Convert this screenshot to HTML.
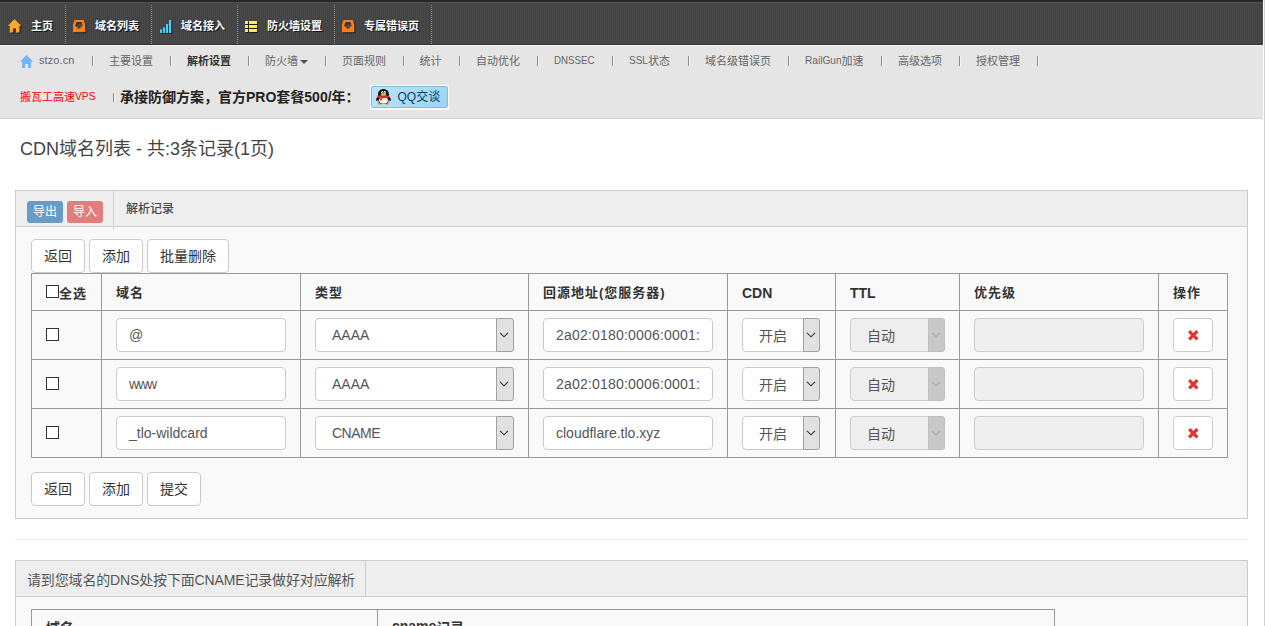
<!DOCTYPE html>
<html lang="zh-CN">
<head>
<meta charset="utf-8">
<title>CDN域名列表</title>
<style>
*{box-sizing:border-box;}
html,body{margin:0;padding:0;}
body{width:1265px;height:626px;overflow:hidden;background:#fff;font-family:"Liberation Sans","Noto Sans CJK SC",sans-serif;font-size:14px;line-height:1.42857;color:#333;position:relative;}
#wrap{position:absolute;left:0;top:0;width:1263px;height:626px;overflow:hidden;}
#sb{position:absolute;left:1264px;top:0;width:1px;height:626px;background:#d0d0d0;}
#topbar{position:absolute;left:0;top:0;width:1263px;height:45px;background-color:#444;background-image:repeating-linear-gradient(90deg,rgba(255,255,255,.03) 0,rgba(255,255,255,.03) 1px,transparent 1px,transparent 2px),repeating-linear-gradient(0deg,rgba(0,0,0,.05) 0,rgba(0,0,0,.05) 1px,transparent 1px,transparent 2px);border-top:2px solid #272727;border-bottom:1px solid #353535;box-shadow:inset 0 1px 0 #555;}
#topbar .it{position:absolute;top:3px;height:40px;color:#fff;font-weight:bold;font-size:11px;line-height:16px;}
#topbar .it span{position:absolute;top:13px;white-space:nowrap;text-shadow:1px 1px 0 #111;}
#topbar .it svg{position:absolute;}
#topbar .it::after{content:"";position:absolute;right:0;top:0;width:1px;height:39px;background:repeating-linear-gradient(180deg,#8c8c8c 0,#8c8c8c 1px,transparent 1px,transparent 2px);}
#sub{position:absolute;left:0;top:45px;width:1263px;height:74px;background:#e5e5e5;box-shadow:inset 0 1px 0 #f0f0f0;border-bottom:1px solid #d3d3d3;}
#sub .l{position:absolute;top:8px;font-size:11px;line-height:16px;color:#666;white-space:nowrap;}
#sub .sep{position:absolute;top:11px;width:1px;height:9.500px;background:#8c8c8c;box-shadow:1px 0 0 rgba(255,255,255,.55);}
#sub .la{display:inline-block;font-weight:inherit;position:relative;top:-1px;height:14px;vertical-align:top;}
#sub .la b{display:inline-block;font-weight:inherit;transform-origin:0 0;white-space:nowrap;}
h3{position:absolute;left:20px;top:136px;margin:0;font-size:18px;font-weight:normal;line-height:26px;color:#444;white-space:nowrap;}
.panel{position:absolute;left:15px;width:1233px;background:#f9f9f9;border:1px solid #ccc;}
.phead{position:absolute;left:0;top:0;width:100%;height:36px;background:#eee;border-bottom:1px solid #d0d0d0;}
.lbl{position:absolute;top:10px;height:22px;border-radius:3px;color:#fff;font-size:12px;line-height:23px;text-align:center;}
.btn{position:absolute;height:34px;border:1px solid #ccc;border-radius:4px;background:#fff;color:#333;font-size:14px;line-height:32px;text-align:center;white-space:nowrap;}
.grid i{position:absolute;display:block;background:#999;}
.grid i.h{height:1px;}
.grid i.v{width:1px;}
.th{position:absolute;font-weight:bold;font-size:14px;line-height:20px;color:#333;white-space:nowrap;}
.inp{position:absolute;height:34px;border:1px solid #ccc;border-radius:4px;background:#fff;color:#555;font-size:14px;line-height:32px;padding-left:12px;white-space:nowrap;overflow:hidden;}
.sel{padding-left:16px;overflow:visible;}
.dis{background:#eee;}
.arr{position:absolute;right:-1px;top:-1px;width:17px;height:34px;background:#e1e1e1;border:1px solid #a0a0a0;border-radius:0 3px 3px 0;}
.dis .arr{background:#c8c8c8;border-color:#c0c0c0;}
.chev{position:absolute;left:2px;top:12.500px;}
.cj{position:relative;top:1px;}
.cjh{font-size:13px;letter-spacing:1px;}
.cb{position:absolute;width:13px;height:13px;border:1px solid #333;background:#fff;}
</style>
</head>
<body>
<div id="wrap">
<div id="topbar">
  <div class="it" style="left:0;width:66px;"><svg style="left:8px;top:14px" width="15" height="15" viewBox="0 0 15 15"><g fill="#1a1a1a" transform="translate(1,1)"><path d="M6.5 0 L13.4 7 H11.5 V13.5 H8 V9.5 H5.2 V13.5 H1.8 V7 H-0.2 Z"/></g><path fill="#ffa62e" d="M6.5 0 L13.4 7 H11.5 V13.5 H8 V9.5 H5.2 V13.5 H1.8 V7 H-0.2 Z"/></svg><span style="left:31px;">主页</span></div>
  <div class="it" style="left:66px;width:86px;"><svg style="left:7px;top:15px" width="15" height="15" viewBox="0 0 15 15"><path fill="#1a1a1a" fill-rule="evenodd" transform="translate(1,1)" d="M1.600 0 H10.700 L12.300 4.500 V12.300 H0 V4.500 Z M3.400 2.200 H8.800 L9.700 6.400 H7.700 V8.500 H4.400 V6.400 H2.300 Z"/><path fill="#ff7f15" fill-rule="evenodd" d="M1.600 0 H10.700 L12.300 4.500 V12.300 H0 V4.500 Z M3.400 2.200 H8.800 L9.700 6.400 H7.700 V8.500 H4.400 V6.400 H2.300 Z"/></svg><span style="left:29px;">域名列表</span></div>
  <div class="it" style="left:152px;width:86px;"><svg style="left:8px;top:15px" width="14" height="15" viewBox="0 0 14 15"><g fill="#1a1a1a" transform="translate(1,1)"><rect x="0" y="9.500" width="2.200" height="3.500"/><rect x="3" y="7.500" width="2.200" height="5.500"/><rect x="6" y="4" width="2.200" height="9"/><rect x="9" y="0" width="2.200" height="13"/></g><g fill="#3cd4f8"><rect x="0" y="9.500" width="2.200" height="3.500"/><rect x="3" y="7.500" width="2.200" height="5.500"/><rect x="6" y="4" width="2.200" height="9"/><rect x="9" y="0" width="2.200" height="13"/></g></svg><span style="left:29px;">域名接入</span></div>
  <div class="it" style="left:238px;width:97px;"><svg style="left:7px;top:16px" width="14" height="13" viewBox="0 0 14 13"><g fill="#1a1a1a" transform="translate(1,1)"><rect x="0" y="0" width="3" height="3"/><rect x="4" y="0" width="8" height="3"/><rect x="0" y="4" width="3" height="3"/><rect x="4" y="4" width="8" height="3"/><rect x="0" y="8" width="3" height="3"/><rect x="4" y="8" width="8" height="3"/></g><g fill="#fff03a"><rect x="0" y="0" width="3" height="3"/><rect x="4" y="0" width="8" height="3"/><rect x="0" y="4" width="3" height="3"/><rect x="4" y="4" width="8" height="3"/><rect x="0" y="8" width="3" height="3"/><rect x="4" y="8" width="8" height="3"/></g></svg><span style="left:29px;">防火墙设置</span></div>
  <div class="it" style="left:335px;width:97px;"><svg style="left:7px;top:15px" width="15" height="15" viewBox="0 0 15 15"><path fill="#1a1a1a" fill-rule="evenodd" transform="translate(1,1)" d="M1.600 0 H10.700 L12.300 4.500 V12.300 H0 V4.500 Z M3.400 2.200 H8.800 L9.700 6.400 H7.700 V8.500 H4.400 V6.400 H2.300 Z"/><path fill="#ff7f15" fill-rule="evenodd" d="M1.600 0 H10.700 L12.300 4.500 V12.300 H0 V4.500 Z M3.400 2.200 H8.800 L9.700 6.400 H7.700 V8.500 H4.400 V6.400 H2.300 Z"/></svg><span style="left:29px;">专属错误页</span></div>
</div>
<div id="sub">
  <svg style="position:absolute;left:20px;top:10px" width="14" height="13" viewBox="0 0 14 13"><path fill="#74b3f5" d="M6.500 0 L13.100 6.800 H11 V12.900 H8.100 V9 H5.100 V12.900 H2.100 V6.800 H-0.100 Z"/></svg>
  <span class="l" style="left:39px;top:7px;letter-spacing:0.100px;">stzo.cn</span><span class="sep" style="left:91.5px;"></span>
  <span class="l" style="left:109px;">主要设置</span><span class="sep" style="left:169.5px;"></span>
  <span class="l" style="left:187px;font-weight:bold;color:#333;">解析设置</span><span class="sep" style="left:247.5px;"></span>
  <span class="l" style="left:265px;">防火墙</span><span class="sep" style="left:324.5px;"></span>
  <span class="l" style="left:342px;">页面规则</span><span class="sep" style="left:402.5px;"></span>
  <span class="l" style="left:419.5px;">统计</span><span class="sep" style="left:458.5px;"></span>
  <span class="l" style="left:476px;">自动优化</span><span class="sep" style="left:536.5px;"></span>
  <span class="l" style="left:554px;top:7px;transform:scaleX(0.885);transform-origin:0 0;">DNSSEC</span><span class="sep" style="left:612.0px;"></span>
  <span class="l" style="left:629px;"><b class="la" style="width:19px"><b style="transform:scaleX(0.910)">SSL</b></b>状态</span><span class="sep" style="left:688.0px;"></span>
  <span class="l" style="left:705px;">域名级错误页</span><span class="sep" style="left:788.0px;"></span>
  <span class="l" style="left:805px;"><b class="la" style="width:36.500px"><b style="transform:scaleX(0.920)">RailGun</b></b>加速</span><span class="sep" style="left:881.0px;"></span>
  <span class="l" style="left:898px;">高级选项</span><span class="sep" style="left:959.0px;"></span>
  <span class="l" style="left:976px;">授权管理</span><span class="sep" style="left:1037.0px;"></span>
  <svg style="position:absolute;left:300px;top:15px" width="8" height="4" viewBox="0 0 8 4"><path fill="#555" d="M0 0 H8 L4 4 Z"/></svg>
  <span class="l" style="left:20px;top:44px;color:#f00;">搬瓦工高速<b class="la" style="width:20.500px"><b style="transform:scaleX(0.930)">VPS</b></b></span><span class="sep" style="left:112.500px;top:48px;height:9px;"></span>
  <span class="l" style="left:120px;top:42px;font-size:14px;line-height:20px;font-weight:bold;color:#222;">承接防御方案，官方PRO套餐500/年：</span>
  <div style="position:absolute;left:370px;top:40px;width:79px;height:25px;background:#f4fafd;"></div>
  <div style="position:absolute;left:371px;top:41px;width:77px;height:22px;border:1px solid #7ebbe0;background:linear-gradient(135deg,#bbe4fb,#9ad5f5);border-radius:2px;"><span style="position:absolute;left:25.500px;top:2px;font-size:12px;line-height:16px;color:#0e3a5c;white-space:nowrap;">QQ交谈</span>
  <svg style="position:absolute;left:4px;top:2px" width="16" height="16" viewBox="0 0 16 16"><ellipse cx="4" cy="14.600" rx="2.600" ry="1.100" fill="#f5a300"/><ellipse cx="11" cy="14.600" rx="2.600" ry="1.100" fill="#f5a300"/><path fill="#151515" d="M7.500 0 C4.300 0 2 2.400 2 5.200 C2 6.500 1.900 7.500 1.200 8.300 C0.300 9.400 -0.200 11 0.300 11.800 C0.800 12.400 1.600 11.600 2.200 10.800 C2.300 12.800 3.200 14.200 4.200 14.400 H10.800 C11.800 14.200 12.700 12.800 12.800 10.800 C13.400 11.600 14.200 12.400 14.700 11.800 C15.200 11 14.700 9.400 13.800 8.300 C13.100 7.500 13 6.500 13 5.200 C13 2.400 10.700 0 7.500 0 Z"/><ellipse cx="7.500" cy="11.300" rx="4.400" ry="3.200" fill="#fff"/><path fill="#e63323" d="M2 6.200 C5 7.600 10 7.600 13 6.200 L13.200 8.200 C10.500 9.300 7.500 9.400 6 9.200 L6 11.600 L4.200 11.600 L4.200 8.900 C3.200 8.700 2.400 8.500 1.900 8.200 Z"/><ellipse cx="6.300" cy="3.400" rx="1.200" ry="1.500" fill="#fff"/><ellipse cx="8.700" cy="3.400" rx="1.200" ry="1.500" fill="#fff"/><circle cx="6.800" cy="3.700" r="0.550" fill="#111"/><circle cx="8.200" cy="3.700" r="0.550" fill="#111"/><ellipse cx="7.500" cy="5.900" rx="3" ry="1.100" fill="#f7a600"/></svg></div>
</div>
<h3>CDN域名列表 - 共:3条记录(1页)</h3>
<div class="panel" style="top:190px;height:329px;">
  <div class="phead">
    <div class="lbl" style="left:11px;width:36px;background:#6a9bc8;">导出</div>
    <div class="lbl" style="left:51px;width:36px;background:#e07e7c;">导入</div>
    <div style="position:absolute;left:97px;top:0;width:1px;height:39px;background:#d0d0d0;"></div>
    <span style="position:absolute;left:110px;top:9px;font-size:12px;line-height:18px;font-weight:500;color:#4a4a4a;">解析记录</span>
  </div>
</div>
<div class="btn" style="left:31px;top:239px;width:54px;">返回</div>
<div class="btn" style="left:89px;top:239px;width:54px;">添加</div>
<div class="btn" style="left:147px;top:239px;width:82px;">批量删除</div>
<div class="grid">
<i class="h" style="left:31px;top:273px;width:1197px"></i><i class="h" style="left:31px;top:310px;width:1197px"></i><i class="h" style="left:31px;top:359px;width:1197px"></i><i class="h" style="left:31px;top:408px;width:1197px"></i><i class="h" style="left:31px;top:457px;width:1197px"></i>
<i class="v" style="left:31px;top:273px;height:185px"></i><i class="v" style="left:101px;top:273px;height:185px"></i><i class="v" style="left:300px;top:273px;height:185px"></i><i class="v" style="left:528px;top:273px;height:185px"></i><i class="v" style="left:727px;top:273px;height:185px"></i><i class="v" style="left:835px;top:273px;height:185px"></i><i class="v" style="left:959px;top:273px;height:185px"></i><i class="v" style="left:1158px;top:273px;height:185px"></i><i class="v" style="left:1227px;top:273px;height:185px"></i>
</div>
<div class="cb" style="left:46px;top:285px;"></div><span class="th cjh" style="left:59px;top:284px;">全选</span>
<span class="th cjh" style="left:116px;top:283px;">域名</span>
<span class="th cjh" style="left:315px;top:283px;">类型</span>
<span class="th cjh" style="left:543px;top:283px;">回源地址(您服务器)</span>
<span class="th" style="left:742px;top:283px;">CDN</span>
<span class="th" style="left:850px;top:283px;">TTL</span>
<span class="th cjh" style="left:974px;top:283px;">优先级</span>
<span class="th cjh" style="left:1173px;top:283px;">操作</span>
<div class="cb" style="left:46px;top:328px;"></div>
<div class="inp" style="left:116px;top:318px;width:170px;">@</div>
<div class="inp sel" style="left:315px;top:318px;width:199px;">AAAA<div class="arr" style="width:18px"><svg class="chev" width="10" height="6" viewBox="0 0 10 6"><path d="M1 0.800 L5 4.800 L9 0.800" fill="none" stroke="#333" stroke-width="1.100"/></svg></div></div>
<div class="inp" style="left:543px;top:318px;width:170px;letter-spacing:0.200px;">2a02:0180:0006:0001:</div>
<div class="inp sel" style="left:742px;top:318px;width:78px;"><span class="cj">开启</span><div class="arr"><svg class="chev" width="10" height="6" viewBox="0 0 10 6"><path d="M1 0.800 L5 4.800 L9 0.800" fill="none" stroke="#333" stroke-width="1.100"/></svg></div></div>
<div class="inp sel dis" style="left:850px;top:318px;width:95px;"><span class="cj">自动</span><div class="arr"><svg class="chev" width="10" height="6" viewBox="0 0 10 6"><path d="M1 0.800 L5 4.800 L9 0.800" fill="none" stroke="#aaa" stroke-width="1.100"/></svg></div></div>
<div class="inp dis" style="left:974px;top:318px;width:170px;"></div>
<div class="btn" style="left:1173px;top:318px;width:40px;"><svg style="position:absolute;left:14px;top:11px" width="10.500" height="10.500" viewBox="0 0 10.500 10.500"><path fill="#e5322d" d="M2.300 0 L5.250 2.950 L8.200 0 L10.500 2.300 L7.550 5.250 L10.500 8.200 L8.200 10.500 L5.250 7.550 L2.300 10.500 L0 8.200 L2.950 5.250 L0 2.300 Z"/></svg></div>
<div class="cb" style="left:46px;top:377px;"></div>
<div class="inp" style="left:116px;top:367px;width:170px;letter-spacing:-1.100px;">www</div>
<div class="inp sel" style="left:315px;top:367px;width:199px;">AAAA<div class="arr" style="width:18px"><svg class="chev" width="10" height="6" viewBox="0 0 10 6"><path d="M1 0.800 L5 4.800 L9 0.800" fill="none" stroke="#333" stroke-width="1.100"/></svg></div></div>
<div class="inp" style="left:543px;top:367px;width:170px;letter-spacing:0.200px;">2a02:0180:0006:0001:</div>
<div class="inp sel" style="left:742px;top:367px;width:78px;"><span class="cj">开启</span><div class="arr"><svg class="chev" width="10" height="6" viewBox="0 0 10 6"><path d="M1 0.800 L5 4.800 L9 0.800" fill="none" stroke="#333" stroke-width="1.100"/></svg></div></div>
<div class="inp sel dis" style="left:850px;top:367px;width:95px;"><span class="cj">自动</span><div class="arr"><svg class="chev" width="10" height="6" viewBox="0 0 10 6"><path d="M1 0.800 L5 4.800 L9 0.800" fill="none" stroke="#aaa" stroke-width="1.100"/></svg></div></div>
<div class="inp dis" style="left:974px;top:367px;width:170px;"></div>
<div class="btn" style="left:1173px;top:367px;width:40px;"><svg style="position:absolute;left:14px;top:11px" width="10.500" height="10.500" viewBox="0 0 10.500 10.500"><path fill="#e5322d" d="M2.300 0 L5.250 2.950 L8.200 0 L10.500 2.300 L7.550 5.250 L10.500 8.200 L8.200 10.500 L5.250 7.550 L2.300 10.500 L0 8.200 L2.950 5.250 L0 2.300 Z"/></svg></div>
<div class="cb" style="left:46px;top:426px;"></div>
<div class="inp" style="left:116px;top:416px;width:170px;">_tlo-wildcard</div>
<div class="inp sel" style="left:315px;top:416px;width:199px;letter-spacing:-0.500px;">CNAME<div class="arr" style="width:18px"><svg class="chev" width="10" height="6" viewBox="0 0 10 6"><path d="M1 0.800 L5 4.800 L9 0.800" fill="none" stroke="#333" stroke-width="1.100"/></svg></div></div>
<div class="inp" style="left:543px;top:416px;width:170px;">cloudflare.tlo.xyz</div>
<div class="inp sel" style="left:742px;top:416px;width:78px;"><span class="cj">开启</span><div class="arr"><svg class="chev" width="10" height="6" viewBox="0 0 10 6"><path d="M1 0.800 L5 4.800 L9 0.800" fill="none" stroke="#333" stroke-width="1.100"/></svg></div></div>
<div class="inp sel dis" style="left:850px;top:416px;width:95px;"><span class="cj">自动</span><div class="arr"><svg class="chev" width="10" height="6" viewBox="0 0 10 6"><path d="M1 0.800 L5 4.800 L9 0.800" fill="none" stroke="#aaa" stroke-width="1.100"/></svg></div></div>
<div class="inp dis" style="left:974px;top:416px;width:170px;"></div>
<div class="btn" style="left:1173px;top:416px;width:40px;"><svg style="position:absolute;left:14px;top:11px" width="10.500" height="10.500" viewBox="0 0 10.500 10.500"><path fill="#e5322d" d="M2.300 0 L5.250 2.950 L8.200 0 L10.500 2.300 L7.550 5.250 L10.500 8.200 L8.200 10.500 L5.250 7.550 L2.300 10.500 L0 8.200 L2.950 5.250 L0 2.300 Z"/></svg></div>
<div class="btn" style="left:31px;top:472px;width:54px;">返回</div>
<div class="btn" style="left:89px;top:472px;width:54px;">添加</div>
<div class="btn" style="left:147px;top:472px;width:54px;">提交</div>
<div style="position:absolute;left:15px;top:539px;width:1233px;height:1px;background:#eee;"></div>
<div class="panel" style="top:560px;height:200px;">
  <div class="phead">
    <span style="position:absolute;left:11px;top:9px;font-size:14px;line-height:20px;color:#555;white-space:nowrap;letter-spacing:-0.150px;">请到您域名的DNS处按下面CNAME记录做好对应解析</span>
    <div style="position:absolute;left:349px;top:0;width:1px;height:36px;background:#d0d0d0;"></div>
  </div>
</div>
<div class="grid"><i class="h" style="left:31px;top:609px;width:1024px"></i><i class="v" style="left:31px;top:609px;height:40px"></i><i class="v" style="left:377px;top:609px;height:40px"></i><i class="v" style="left:1054px;top:609px;height:40px"></i></div>
<span class="th" style="left:46px;top:618px;">域名</span><span class="th" style="left:392px;top:616px;">cname<span style="position:relative;top:2px">记录</span></span>
</div>
<div id="sb"></div>
</body>
</html>
